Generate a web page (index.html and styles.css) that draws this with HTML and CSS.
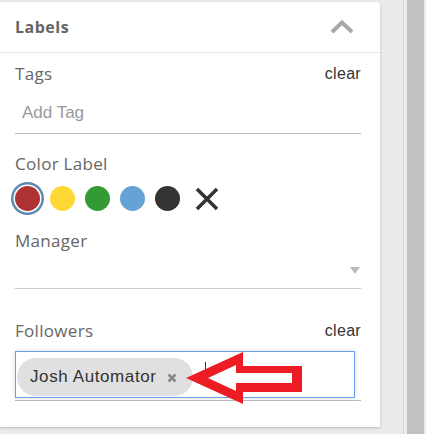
FILE: index.html
```html
<!DOCTYPE html>
<html lang="en">
<head>
  <meta charset="UTF-8">
  <meta name="viewport" content="width=device-width, initial-scale=1.0">
  <title>Labels</title>
  <link rel="stylesheet" href="styles.css">
</head>
<body>
  <div class="page">
    <section class="panel">
      <header class="panel-head">
        <h2>Labels</h2>
        <svg class="chevron" width="24" height="16" viewBox="0 0 24 16">
          <polyline points="2,13 12,3.5 22,13" fill="none" stroke="#a9a9a9" stroke-width="4"/>
        </svg>
      </header>

      <div class="panel-body">
        <div class="field field-tags">
          <div class="field-top">
            <label>Tags</label>
            <a class="clear">clear</a>
          </div>
          <div class="tag-input">Add Tag</div>
        </div>

        <div class="field field-color">
          <label>Color Label</label>
          <div class="swatches">
            <span class="swatch red selected"></span>
            <span class="swatch yellow"></span>
            <span class="swatch green"></span>
            <span class="swatch blue"></span>
            <span class="swatch black"></span>
            <svg class="swatch-none" width="24" height="24" viewBox="0 0 24 24">
              <path d="M2 2 L22 22 M22 2 L2 22" stroke="#333" stroke-width="3.5"/>
            </svg>
          </div>
        </div>

        <div class="field field-manager">
          <label>Manager</label>
          <div class="select"><span class="select-arrow"></span></div>
        </div>

        <div class="field field-followers">
          <div class="field-top">
            <label>Followers</label>
            <a class="clear">clear</a>
          </div>
          <div class="followers">
            <div class="followers-box">
              <span class="chip">Josh Automator
                <svg class="chip-x" width="10" height="10" viewBox="0 0 10 10">
                  <path d="M1.5 1.5 L8.5 8.5 M8.5 1.5 L1.5 8.5" stroke="#888" stroke-width="2.6"/>
                </svg>
              </span>
              <span class="cursor"></span>
            </div>
          </div>
        </div>
      </div>

      <!-- annotation arrow -->
      <svg class="arrow" width="130" height="65" viewBox="0 0 130 65">
        <path fill="#ed1c24" fill-rule="evenodd"
          d="M6 33 L63 7 L63 21 L122 21 L122 47 L63 47 L63 59 Z
             M28 33 L56 20 L56 28 L112 28 L112 38 L56 38 L56 46 Z"/>
      </svg>
    </section>

    <div class="scroll"><div class="thumb"></div></div>
  </div>
</body>
</html>
```

FILE: styles.css
```css
body {
  margin: 0;
  background-color: #ebebed;
  font-family: "Open Sans", sans-serif;
}
.page {
  display: flex;
  height: 434px;
  overflow: hidden;
}
.panel {
  position: relative;
  box-sizing: border-box;
  width: 380px;
  height: 425px;
  margin-top: 2px;
  background-color: #fff;
  border-top-right-radius: 3px;
  box-shadow: 0 1px 3px rgba(0, 0, 0, 0.22);
  flex-shrink: 0;
}
.panel-head {
  box-sizing: border-box;
  height: 51px;
  padding: 0 26px 0 15px;
  border-bottom: 1px solid #e6e6e6;
  display: flex;
  align-items: center;
  justify-content: space-between;
}
.panel-head h2 {
  margin: 0;
  font-size: 16px;
  font-weight: bold;
  color: #666;
  letter-spacing: 0.5px;
}
.chevron {
  display: block;
}
.panel-body {
  padding: 0 19px 0 15px;
}
.field label {
  display: block;
  font-size: 17px;
  line-height: 22px;
  color: #666;
  letter-spacing: 0.3px;
}
.field-top {
  display: flex;
  justify-content: space-between;
  align-items: flex-start;
}
.clear {
  margin-top: 1px;
  font-family: "Liberation Sans", Arial, sans-serif;
  font-size: 16px;
  line-height: 20px;
  color: #333;
  letter-spacing: 0.3px;
  cursor: pointer;
}
.field-tags {
  margin-top: 10px;
}
.tag-input {
  padding: 18px 7px 11px;
  font-family: "Liberation Sans", Arial, sans-serif;
  font-size: 17px;
  line-height: 19px;
  color: #999;
  border-bottom: 1px solid #bbb;
}
.field-color {
  margin-top: 19px;
}
.swatches {
  display: flex;
  align-items: center;
  gap: 10px;
  margin-top: 11px;
  height: 25px;
}
.swatch {
  width: 25px;
  height: 25px;
  border-radius: 50%;
  cursor: pointer;
}
.swatch.selected {
  box-shadow: 0 0 0 1.5px #fff, 0 0 0 4px #5b8ab5;
}
.red { background-color: #ad3232; }
.yellow { background-color: #fdd835; }
.green { background-color: #349a35; }
.blue { background-color: #67a2d6; }
.black { background-color: #333; }
.swatch-none {
  margin-left: 5px;
}
.field-manager {
  margin-top: 19px;
}
.select {
  position: relative;
  height: 36px;
  border-bottom: 1px solid #ccc;
}
.select-arrow {
  position: absolute;
  right: 1px;
  top: 15px;
  border-left: 5.5px solid transparent;
  border-right: 5.5px solid transparent;
  border-top: 7px solid #bbb;
}
.field-followers {
  margin-top: 31px;
}
.followers {
  margin-top: 9px;
  padding-bottom: 2px;
  border-bottom: 1px solid #bbb;
}
.followers-box {
  box-sizing: border-box;
  width: 340px;
  height: 47px;
  padding: 0 0 1px 1px;
  border: 1px solid #6d9eeb;
  box-shadow: 0 0 4px rgba(0, 0, 0, 0.15);
  display: flex;
  align-items: flex-end;
}
.chip {
  box-sizing: border-box;
  height: 38px;
  width: 176px;
  padding: 0 0 0 13px;
  border-radius: 19px;
  background-color: #e0e0e0;
  font-family: "Liberation Sans", Arial, sans-serif;
  font-size: 17px;
  letter-spacing: 0.6px;
  color: #333;
  display: flex;
  align-items: center;
}
.chip-x {
  margin: 2px 0 0 10px;
}
.cursor {
  align-self: flex-start;
  margin: 10px 0 0 12px;
  width: 1px;
  height: 9px;
  background-color: #333;
}
.arrow {
  position: absolute;
  left: 180px;
  top: 343px;
}
.scroll {
  margin-left: 23px;
  padding: 0 2px 0 3px;
  border-left: 1px solid #d6d6d6;
}
.thumb {
  width: 17px;
  height: 100%;
  background-color: #c1c1c1;
}
```
